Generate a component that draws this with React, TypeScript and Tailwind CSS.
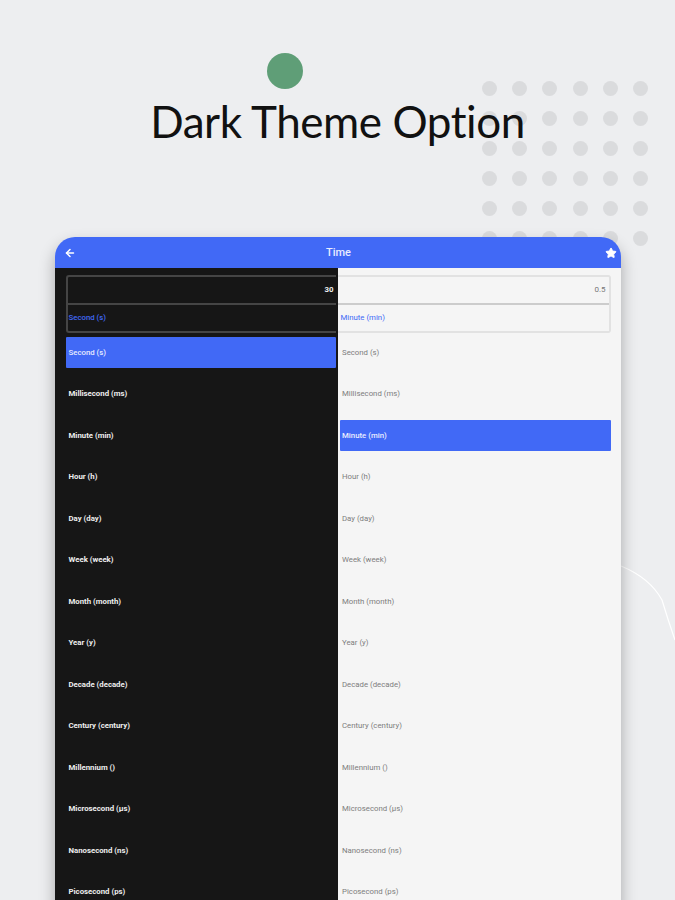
import { ArrowLeft, Star } from "lucide-react";

const units = [
  "Second (s)",
  "Millisecond (ms)",
  "Minute (min)",
  "Hour (h)",
  "Day (day)",
  "Week (week)",
  "Month (month)",
  "Year (y)",
  "Decade (decade)",
  "Century (century)",
  "Millennium ()",
  "Microsecond (µs)",
  "Nanosecond (ns)",
  "Picosecond (ps)",
];

const dots = Array.from({ length: 36 });

const DarkPanel = () => (
  <div className="w-[283px] bg-[#161616] pl-[11px] pr-[2px] pt-[7px]">
    <div className="rounded-tl-[3px] rounded-bl-[3px] border-y-2 border-l-2 border-[#454545] h-[58px] flex flex-col">
      <div className="h-[28px] border-b-2 border-[#454545] flex items-center justify-end text-[7.8px] font-bold text-[#eeeeee] pr-[2px]">
        30
      </div>
      <div className="flex-1 flex items-center pl-[1px] text-[7.8px] font-medium text-[#4169f6]">
        Second (s)
      </div>
    </div>
    <div className="mt-[4px] flex flex-col gap-[10.5px]">
      {units.map((unit, i) => (
        <div
          key={unit}
          className={`h-[31px] shrink-0 flex items-center pl-[3px] text-[7.8px] font-bold rounded-[1px] ${i === 0 ? "bg-[#4169f6] text-[#e8ecff] font-medium" : "text-[#eeeeee]"}`}
        >
          {unit}
        </div>
      ))}
    </div>
  </div>
);

const LightPanel = () => (
  <div className="w-[283px] bg-[#f5f5f5] pr-[10px] pt-[7px]">
    <div className="rounded-tr-[3px] rounded-br-[3px] border-y-2 border-r-2 border-[#e2e2e2] h-[58px] flex flex-col">
      <div className="h-[28px] border-b-2 border-[#cccccc] flex items-center justify-end text-[8px] text-[#777777] pr-[3px]">
        0.5
      </div>
      <div className="flex-1 flex items-center pl-[3px] text-[7.8px] text-[#4169f6]">
        Minute (min)
      </div>
    </div>
    <div className="mt-[4px] pl-[2px] flex flex-col gap-[10.5px]">
      {units.map((unit, i) => (
        <div
          key={unit}
          className={`h-[31px] shrink-0 flex items-center pl-[2.5px] text-[7.8px] rounded-[1px] ${i === 2 ? "bg-[#4169f6] text-[#e8ecff] font-medium" : "text-[#7d7d7d]"}`}
        >
          {unit}
        </div>
      ))}
    </div>
  </div>
);

export default function App() {
  return (
    <div className="relative h-[900px] w-[675px] overflow-hidden bg-[#edeef0] font-['Roboto',sans-serif]">
      {/* background decoration */}
      <div className="absolute left-[482px] top-[81px] grid grid-cols-6 gap-x-[15.2px] gap-y-[15px]">
        {dots.map((_, i) => (
          <div key={i} className="h-[15px] w-[15px] rounded-full bg-[#dadbdd]" />
        ))}
      </div>
      <svg className="absolute left-[600px] top-[550px]" width="75" height="100" fill="none">
        <path d="M21 16 Q50 28 62 50 Q68 70 75 90" stroke="#ffffff" strokeWidth="1.2" />
      </svg>

      <div className="relative flex flex-col items-center pt-[53px]">
        <div className="mr-[106px] h-[36px] w-[36px] rounded-full bg-[#5f9e77]" />
        <h1 className="mt-[2px] h-[60px] font-['Lato',sans-serif] text-[44px] leading-[60px] font-normal tracking-[-0.45px] text-[#111111] [font-variant-ligatures:none]">
          Dark Theme Option
        </h1>

        {/* app card */}
        <div className="mt-[86px] w-[566px] rounded-t-[20px] shadow-[0_8px_16px_rgba(0,0,0,0.3)]">
          <div className="h-[31px] rounded-t-[20px] bg-[#4169f6] grid grid-cols-[1fr_auto_1fr] items-center pl-[9px] pr-[4px] text-white">
            <ArrowLeft size={12} strokeWidth={3} />
            <span className="pt-[2px] pr-[3px] text-[11px] font-medium text-[#e8ecff]">Time</span>
            <Star size={12} fill="currentColor" className="justify-self-end" />
          </div>
          <div className="flex h-[640px] overflow-hidden">
            <DarkPanel />
            <LightPanel />
          </div>
        </div>
      </div>
    </div>
  );
}
